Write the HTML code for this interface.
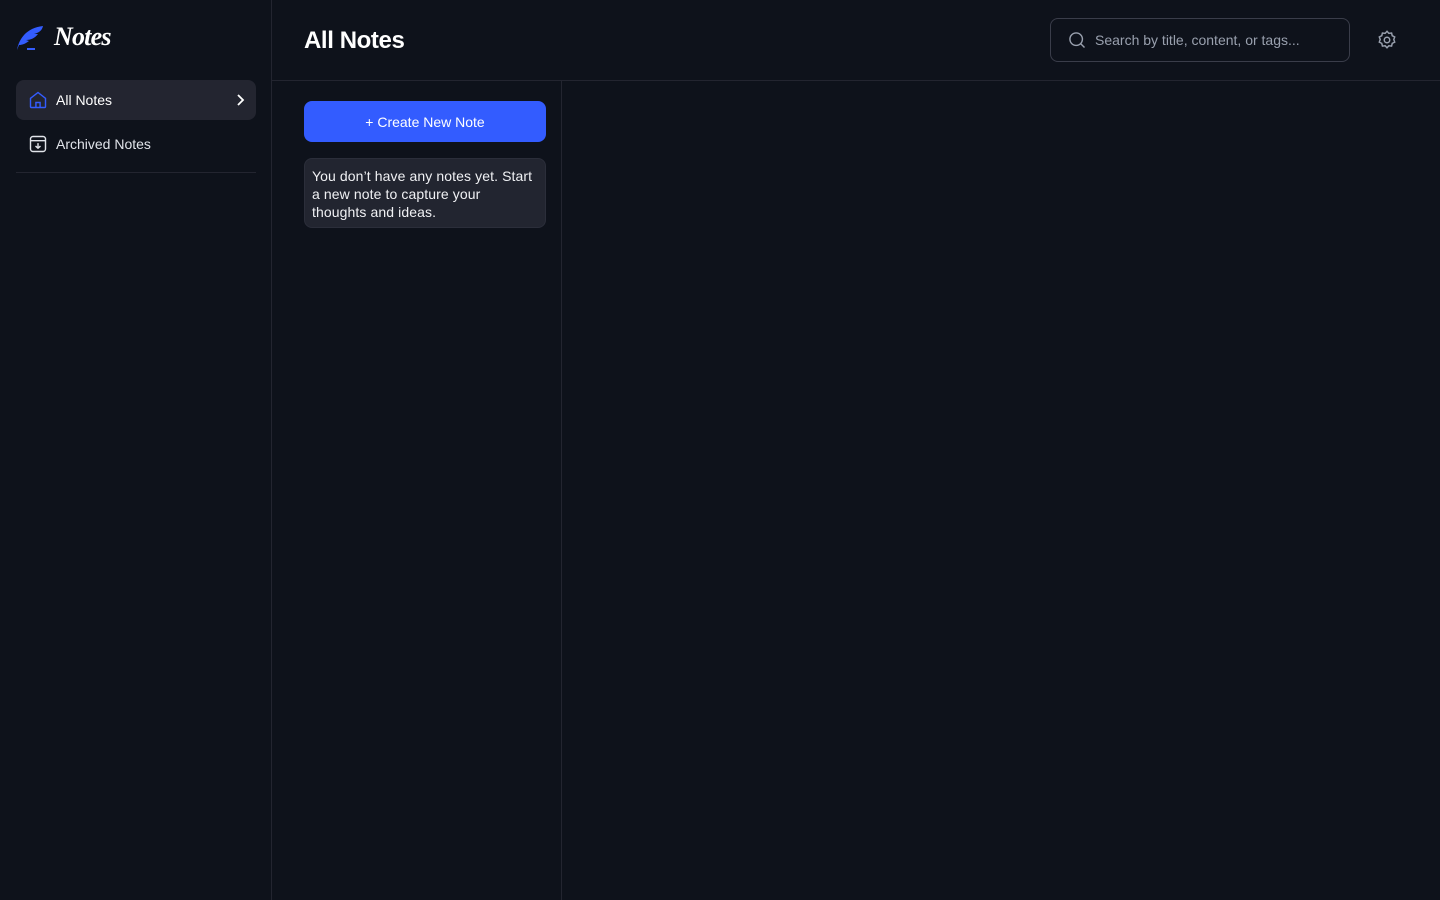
<!DOCTYPE html>
<html><head><style>
*{box-sizing:border-box;margin:0;padding:0}
body{width:1440px;height:900px;background:#0e121b;font-family:"Liberation Sans",sans-serif;color:#fff;position:relative;overflow:hidden}
.side{position:absolute;left:0;top:0;width:272px;height:900px;border-right:1px solid #232530}
.logo{position:absolute;left:16px;top:22px;display:flex;align-items:center}
.logo span{font-family:"Liberation Serif",serif;font-style:italic;font-weight:bold;font-size:26px;margin-left:10px;letter-spacing:-0.8px}
.nav{position:absolute;left:16px;width:240px;height:40px;border-radius:8px;display:flex;align-items:center;padding-left:12px;font-size:14px}
.nav svg{margin-right:8px}
.chev{position:absolute;left:216px;top:12px}
.hr{position:absolute;left:16px;top:172px;width:240px;height:1px;background:#232530}
.top{position:absolute;left:272px;top:0;right:0;height:81px;border-bottom:1px solid #232530}
h1{position:absolute;left:304px;top:27px;font-size:24px;font-weight:bold;letter-spacing:-0.4px}
.search{position:absolute;left:1050px;top:18px;width:300px;height:44px;border:1px solid #3a3d4a;border-radius:8px;display:flex;align-items:center;padding-left:16px;font-size:14px;color:#99a0ae}
.search svg{margin-right:8px}
.col{position:absolute;left:561px;top:81px;width:1px;height:819px;background:#232530}
.btn{position:absolute;left:304px;top:101px;width:242px;height:41px;background:#335cff;border-radius:8px;font-size:14px;display:flex;align-items:center;justify-content:center}
.empty{position:absolute;left:304px;top:158px;width:242px;height:70px;background:#222530;border:1px solid #2b2e3a;border-radius:8px;padding:8px 7px;font-size:14px;line-height:18px;color:#f0f1f4;letter-spacing:0.1px}
</style></head><body>
<div class="side">
<div class="logo"><svg width="28" height="28" viewBox="0 0 28 28"><path d="M1 27 C3 16 10 5 27 3 C26 8 22 10 18 11 L22 11 C19 15 15 17 10 17 L13 18 C9 21 6 22 3 22 L1 27Z" fill="#335cff"/><rect x="11" y="25" width="8" height="2" fill="#335cff"/></svg><span>Notes</span></div>
<div class="nav" style="top:80px;background:#232530">
<svg width="20" height="20" viewBox="0 0 24 24" fill="none" stroke="#335cff" stroke-width="1.7"><path d="M3 10 L12 3 L21 10 V20 a1 1 0 0 1-1 1 H4 a1 1 0 0 1-1-1Z"/><path d="M9.5 21 V15 h5 V21"/></svg>All Notes
<svg class="chev" width="16" height="16" viewBox="0 0 16 16" fill="none" stroke="#fff" stroke-width="1.8"><path d="M6 3 L11 8 L6 13"/></svg></div>
<div class="nav" style="top:124px;color:#e1e4ea">
<svg width="20" height="20" viewBox="0 0 24 24" fill="none" stroke="#e1e4ea" stroke-width="1.7"><rect x="3" y="3" width="18" height="18" rx="3"/><path d="M3 8 H21 M12 11 V17 M9 14.5 L12 17 L15 14.5"/></svg>Archived Notes</div>
<div class="hr"></div>
</div>
<div class="top"></div>
<h1>All Notes</h1>
<div class="search"><svg width="20" height="20" viewBox="0 0 24 24" fill="none" stroke="#99a0ae" stroke-width="1.7"><circle cx="11" cy="11" r="7.5"/><path d="M16.5 16.5 L21 21"/></svg>Search by title, content, or tags...</div>
<svg style="position:absolute;left:1376px;top:29px" width="22" height="22" viewBox="0 0 24 24" fill="none" stroke="#99a0ae" stroke-width="1.6"><circle cx="12" cy="12" r="3"/><path d="M12 2.5l2 2.2 3-.3.7 2.9 2.7 1.4-1 2.8 1 2.8-2.7 1.4-.7 2.9-3-.3-2 2.2-2-2.2-3 .3-.7-2.9-2.7-1.4 1-2.8-1-2.8 2.7-1.4.7-2.9 3 .3z"/></svg>
<div class="col"></div>
<div class="btn">+ Create New Note</div>
<div class="empty">You don’t have any notes yet. Start<br>a new note to capture your<br>thoughts and ideas.</div>
</body></html>
